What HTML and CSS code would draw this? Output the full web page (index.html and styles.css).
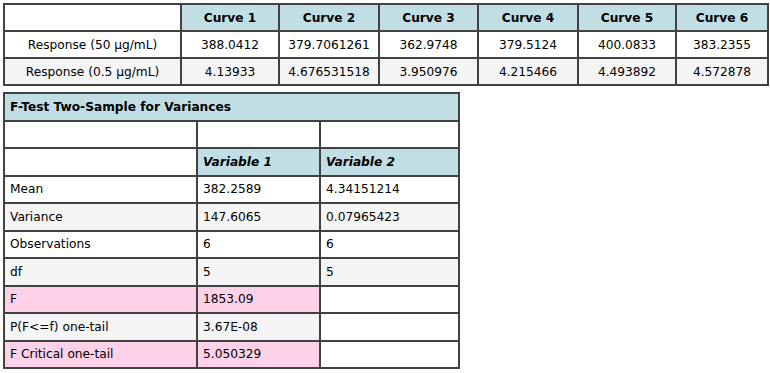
FILE: index.html
```html
<!DOCTYPE html>
<html>
<head>
<meta charset="utf-8">
<link rel="stylesheet" href="styles.css">
</head>
<body>
<table class="grid curves">
  <colgroup>
    <col class="c-label"><col class="c-1"><col class="c-2"><col class="c-3"><col class="c-4"><col class="c-5"><col class="c-6">
  </colgroup>
  <tr>
    <td class="blank"></td>
    <th>Curve 1</th><th>Curve 2</th><th>Curve 3</th><th>Curve 4</th><th>Curve 5</th><th>Curve 6</th>
  </tr>
  <tr>
    <td>Response (50 µg/mL)</td><td>388.0412</td><td>379.7061261</td><td>362.9748</td><td>379.5124</td><td>400.0833</td><td>383.2355</td>
  </tr>
  <tr class="alt">
    <td>Response (0.5 µg/mL)</td><td>4.13933</td><td>4.676531518</td><td>3.950976</td><td>4.215466</td><td>4.493892</td><td>4.572878</td>
  </tr>
</table>

<table class="grid ftest">
  <colgroup>
    <col class="f-label"><col class="f-v1"><col class="f-v2">
  </colgroup>
  <tr><th class="title" colspan="3">F-Test Two-Sample for Variances</th></tr>
  <tr><td></td><td></td><td></td></tr>
  <tr><td></td><th class="var">Variable 1</th><th class="var">Variable 2</th></tr>
  <tr><td>Mean</td><td>382.2589</td><td>4.34151214</td></tr>
  <tr class="alt"><td>Variance</td><td>147.6065</td><td>0.07965423</td></tr>
  <tr><td>Observations</td><td>6</td><td>6</td></tr>
  <tr class="alt"><td>df</td><td>5</td><td>5</td></tr>
  <tr><td class="pink">F</td><td class="pink">1853.09</td><td></td></tr>
  <tr class="alt"><td>P(F&lt;=f) one-tail</td><td>3.67E-08</td><td class="white"></td></tr>
  <tr><td class="pink">F Critical one-tail</td><td class="pink">5.050329</td><td></td></tr>
</table>
</body>
</html>
```

FILE: styles.css
```css
html, body {
  margin: 0;
  padding: 0;
  background: #ffffff;
}
body {
  padding: 3px;
  font-family: "DejaVu Sans", Verdana, sans-serif;
  font-size: 12.2px;
  color: #000;
}
.grid {
  border-collapse: collapse;
  table-layout: fixed;
}
.grid td, .grid th {
  border: 2px solid #424242;
  height: 25px;
  padding: 0 5px;
  font-weight: normal;
  white-space: nowrap;
}
.grid th {
  background: #c1dee5;
  font-weight: bold;
}
.alt td {
  background: #f5f5f5;
}
.curves {
  width: 764px;
}
.curves td, .curves th {
  text-align: center;
}
.c-label { width: 177px; }
.c-1 { width: 98px; }
.c-2 { width: 100px; }
.c-3 { width: 99px; }
.c-4 { width: 100px; }
.c-5 { width: 98px; }
.c-6 { width: 92px; }

.ftest {
  margin-top: 6px;
  width: 455px;
}
.ftest td, .ftest th {
  text-align: left;
  height: 25.5px;
}
.f-label { width: 193px; }
.f-v1 { width: 123px; }
.f-v2 { width: 139px; }
.ftest .var {
  font-style: italic;
}
.ftest td.pink {
  background: #fdd1e7;
}
.ftest td.white {
  background: #ffffff;
}
```
